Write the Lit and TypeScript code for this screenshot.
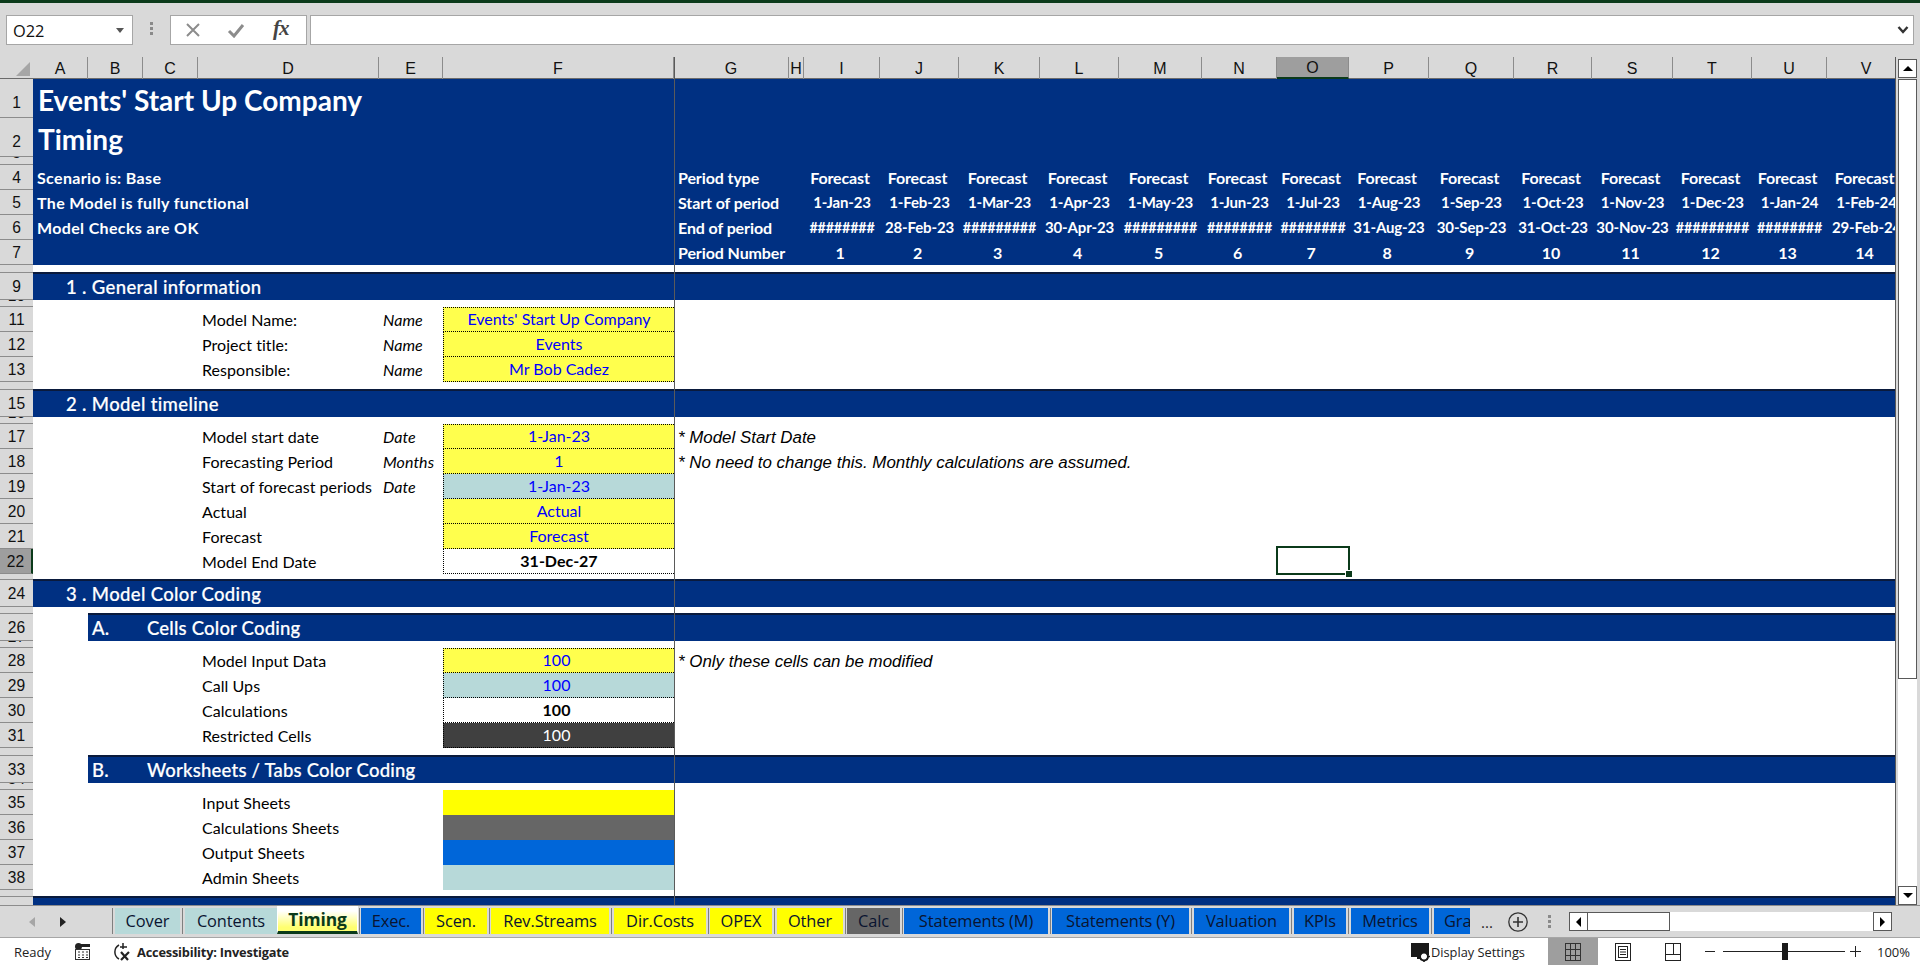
import { LitElement, html, css, svg } from "lit";
import { customElement } from "lit/decorators.js";

const COLS = "ABCDEFGHIJKLMNOPQRSTUV".split("");
const PERIOD_COLS = "IJKLMNOPQRSTUV".split("");
const STARTS = ["1-Jan-23","1-Feb-23","1-Mar-23","1-Apr-23","1-May-23","1-Jun-23","1-Jul-23","1-Aug-23","1-Sep-23","1-Oct-23","1-Nov-23","1-Dec-23","1-Jan-24","1-Feb-24"];
const ENDS = ["########","28-Feb-23","#########","30-Apr-23","#########","########","########","31-Aug-23","30-Sep-23","31-Oct-23","30-Nov-23","#########","########","29-Feb-24"];

type Cell = { t?: string; c?: string };
type Row = { n: number; h: number; k: string; label?: boolean; cells?: Record<string, Cell> };

const period = (vals: string[], c: string, label: string): Record<string, Cell> => {
  const out: Record<string, Cell> = { G: { t: label, c: "plabel" } };
  PERIOD_COLS.forEach((col, i) => (out[col] = { t: vals[i], c: vals[i].startsWith("#") ? c + " hash" : c }));
  return out;
};
const form = (label: string, unit: string, val: string, cls: string, note?: string): Record<string, Cell> => {
  const out: Record<string, Cell> = {
    D: { t: label, c: "lbl" },
    E: { t: unit, c: "unit" },
    F: { t: val, c: cls },
  };
  if (note) out.G = { t: note, c: "note" };
  return out;
};

const ROWS: Row[] = [
  { n: 1, h: 39, k: "blue tall", cells: { A: { t: "Events' Start Up Company", c: "title t1" } } },
  { n: 2, h: 39, k: "blue tall", cells: { A: { t: "Timing", c: "title t2" } } },
  { n: 3, h: 8, k: "blue thin", label: true },
  { n: 4, h: 25, k: "blue", cells: { A: { t: "Scenario is: Base", c: "info" }, ...period(Array(14).fill("Forecast"), "pval off", "Period type") } },
  { n: 5, h: 25, k: "blue", cells: { A: { t: "The Model is fully functional", c: "info" }, ...period(STARTS, "pval", "Start of period") } },
  { n: 6, h: 25, k: "blue", cells: { A: { t: "Model Checks are OK", c: "info" }, ...period(ENDS, "pval", "End of period") } },
  { n: 7, h: 25, k: "blue", cells: period(Array.from({ length: 14 }, (_, i) => String(i + 1)), "pval off", "Period Number") },
  { n: 8, h: 8, k: "white thin pre" },
  { n: 9, h: 27, k: "sec", cells: { A: { t: "1 . General information", c: "sect" } } },
  { n: 10, h: 7, k: "white thin", label: true },
  { n: 11, h: 25, k: "white", cells: form("Model Name:", "Name", "Events' Start Up Company", "inp yel first") },
  { n: 12, h: 25, k: "white", cells: form("Project title:", "Name", "Events", "inp yel") },
  { n: 13, h: 25, k: "white", cells: form("Responsible:", "Name", "Mr Bob Cadez", "inp yel") },
  { n: 14, h: 8, k: "white thin pre" },
  { n: 15, h: 27, k: "sec", cells: { A: { t: "2 . Model timeline", c: "sect" } } },
  { n: 16, h: 7, k: "white thin", label: true },
  { n: 17, h: 25, k: "white", cells: form("Model start date", "Date", "1-Jan-23", "inp yel first", "* Model Start Date") },
  { n: 18, h: 25, k: "white", cells: form("Forecasting Period", "Months", "1", "inp yel", "* No need to change this. Monthly calculations are assumed.") },
  { n: 19, h: 25, k: "white", cells: form("Start of forecast periods", "Date", "1-Jan-23", "inp teal") },
  { n: 20, h: 25, k: "white", cells: form("Actual", "", "Actual", "inp yel") },
  { n: 21, h: 25, k: "white", cells: form("Forecast", "", "Forecast", "inp yel") },
  { n: 22, h: 25, k: "white", cells: form("Model End Date", "", "31-Dec-27", "inp calc") },
  { n: 23, h: 6, k: "white thin pre" },
  { n: 24, h: 27, k: "sec", cells: { A: { t: "3 . Model Color Coding", c: "sect" } } },
  { n: 25, h: 7, k: "white thin pre subpre" },
  { n: 26, h: 27, k: "sec sub", cells: { B: { t: "A.", c: "subh" }, C: { t: "Cells Color Coding", c: "subh" } } },
  { n: 27, h: 7, k: "white thin", label: true },
  { n: 28, h: 25, k: "white", cells: form("Model Input Data", "", "100", "inp yel first shift", "* Only these cells can be modified") },
  { n: 29, h: 25, k: "white", cells: form("Call Ups", "", "100", "inp teal shift") },
  { n: 30, h: 25, k: "white", cells: form("Calculations", "", "100", "inp calc shift") },
  { n: 31, h: 25, k: "white", cells: form("Restricted Cells", "", "100", "inp dark shift") },
  { n: 32, h: 8, k: "white thin pre subpre" },
  { n: 33, h: 27, k: "sec sub", cells: { B: { t: "B.", c: "subh" }, C: { t: "Worksheets / Tabs Color Coding", c: "subh" } } },
  { n: 34, h: 7, k: "white thin", label: true },
  { n: 35, h: 25, k: "white", cells: form("Input Sheets", "", "", "sw-y") },
  { n: 36, h: 25, k: "white", cells: form("Calculations Sheets", "", "", "sw-g") },
  { n: 37, h: 25, k: "white", cells: form("Output Sheets", "", "", "sw-b") },
  { n: 38, h: 25, k: "white", cells: form("Admin Sheets", "", "", "sw-t") },
  { n: 39, h: 7, k: "white thin pre" },
  { n: 40, h: 27, k: "sec thin" },
];

const TABS = [
  { t: "Cover", w: 65, gap: 5, c: "t-teal" },
  { t: "Contents", w: 92, gap: 0, c: "t-teal" },
  { t: "Timing", w: 81, gap: 3, c: "t-active" },
  { t: "Exec.", w: 60, gap: 4, c: "t-blue" },
  { t: "Scen.", w: 62, gap: 4, c: "t-yel" },
  { t: "Rev.Streams", w: 118, gap: 5, c: "t-yel" },
  { t: "Dir.Costs", w: 92, gap: 4, c: "t-yel" },
  { t: "OPEX", w: 62, gap: 5, c: "t-yel" },
  { t: "Other", w: 66, gap: 4, c: "t-yel" },
  { t: "Calc", w: 53, gap: 4, c: "t-gray" },
  { t: "Statements (M)", w: 144, gap: 4, c: "t-blue" },
  { t: "Statements (Y)", w: 137, gap: 5, c: "t-blue" },
  { t: "Valuation", w: 95, gap: 5, c: "t-blue" },
  { t: "KPIs", w: 52, gap: 5, c: "t-blue" },
  { t: "Metrics", w: 78, gap: 5, c: "t-blue" },
  { t: "Graphs", w: 60, gap: 0, c: "t-blue" },
];

@customElement("app-root")
export class AppRoot extends LitElement {
  static styles = css`
    :host { display: block; width: 1920px; height: 966px; overflow: hidden; background: #d9d9d9; }
    * { box-sizing: border-box; }
    .app { display: flex; flex-direction: column; height: 966px; }
    .topline { height: 3px; background: #0b3a1a; flex: none; }

    .fbar { height: 54px; flex: none; display: flex; align-items: flex-start; padding: 12px 6px 0 6px; background: #d9d9d9; }
    .namebox { width: 127px; height: 30px; background: #fff; border: 1px solid #a6a6a6; display: flex; align-items: center; justify-content: space-between; padding: 0 8px 0 6px; font: 16.4px "Open Sans", sans-serif; color: #111; }
    .caret { width: 0; height: 0; border-left: 4px solid transparent; border-right: 4px solid transparent; border-top: 5px solid #555; }
    .grip { width: 37px; display: flex; flex-direction: column; align-items: center; gap: 2px; padding-top: 7px; }
    .grip i { width: 3px; height: 3px; background: #8a8a8a; display: block; }
    .fbtns { width: 137px; height: 30px; background: #fff; border: 1px solid #a6a6a6; display: flex; align-items: center; padding-left: 14px; margin-right: 3px; }
    .fbtns svg { display: block; }
    .fx { font: italic bold 21px "Liberation Serif", serif; color: #444; margin-left: 28px; margin-top: -3px; letter-spacing: -1px; }
    .finput { flex: 1; height: 30px; background: #fff; border: 1px solid #a6a6a6; display: flex; align-items: center; justify-content: flex-end; padding-right: 4px; }

    .sheet { flex: none; height: 848px; display: flex; }
    .grid { position: relative; width: 1895px; height: 848px; overflow: hidden; flex: none; background: #fff; }
    .row { display: grid; grid-template-columns: 33px 55px 55px 55px 181px 64px 231px 115px 15px 76px 79px 81px 79px 83px 75px 72px 80px 85px 78px 81px 79px 75px 79px; width: 1906px; }
    .blue { background: #003082; }
    .white { background: #fff; }
    .sec { background: linear-gradient(#0a1a3c 1px, #003082 1px); }
    .pre { background: linear-gradient(to top, #0a1a3c 1px, #fff 1px); }
    .colhead { height: 21px; background: #d9d9d9; border-bottom: 1px solid #6b6b6b; box-sizing: content-box; }
    .ch { display: flex; align-items: center; justify-content: center; font: 16px "Liberation Sans", sans-serif; color: #111; border-right: 1px solid #8c8c8c; padding-top: 2px; }
    .ch.corner { border-right: 0; position: relative; }
    .ch.sel { background: #9e9e9e; border-bottom: 2px solid #0b3a1a; }
    .corner svg { position: absolute; right: 3px; bottom: 3px; }
    .rh { background: #d9d9d9; border-bottom: 1px solid #8c8c8c; display: flex; justify-content: center; align-items: center; font: 15.6px "Liberation Sans", sans-serif; color: #111; overflow: hidden; padding-top: 2px; }
    .tall .rh { padding-top: 10px; }
    .thin .rh { align-items: flex-start; padding-top: 0; }
    .thin .rh span { margin-top: -13px; }
    .rh.sel { background: #9e9e9e; border-right: 2px solid #0b3a1a; }

    .cell { display: flex; align-items: center; white-space: nowrap; min-width: 0; font: 16px Lato, sans-serif; letter-spacing: 0.05px; color: #000; }
    .sub .cell:nth-child(2), .subpre .cell:nth-child(2) { background: #fff; }
    .title { color: #fff; font-weight: 700; padding-left: 5px; font-size: 28px; padding-top: 3px; letter-spacing: 0; }
    .t2 { padding-left: 5px; }
    .info { color: #fff; font-weight: 700; font-size: 16px; padding-left: 4px; letter-spacing: 0.35px; }
    .plabel { color: #fff; font-weight: 700; font-size: 16px; padding-left: 4px; letter-spacing: -0.1px; }
    .pval { color: #fff; font-weight: 700; font-size: 15px; justify-content: center; padding-bottom: 1px; letter-spacing: -0.15px; }
    .pval.off { font-size: 16px; padding-right: 4px; }
    .pval.hash { font-size: 14.3px; }
    .sect { color: #fff; font-weight: 500; font-size: 18.5px; padding-left: 33px; padding-top: 1px; letter-spacing: 0.35px; -webkit-text-stroke: 0.2px #fff; }
    .subh { color: #fff; font-size: 18.5px; padding-left: 4px; padding-top: 1px; font-weight: 500; letter-spacing: 0.2px; -webkit-text-stroke: 0.2px #fff; }
    .lbl { padding-left: 4px; }
    .unit { padding-left: 4px; font-style: italic; }
    .note { padding-left: 4px; padding-top: 2px; font: italic 16.9px "Liberation Sans", sans-serif; letter-spacing: 0; }
    .inp { border-left: 1px dotted #000; border-bottom: 1px dotted #000; justify-content: center; padding-bottom: 2px; letter-spacing: 0; }
    .inp.first { border-top: 1px dotted #000; }
    .yel { background: #ffff4d; color: #0000ff; }
    .teal { background: #b7d9d9; color: #0000ff; }
    .calc { background: #fff; color: #000; font-weight: 700; }
    .dark { background: #404040; color: #fff; }
    .shift { padding-right: 5px; }
    .sw-y { background: #ffff00; }
    .sw-g { background: #666666; }
    .sw-b { background: #0066d9; }
    .sw-t { background: #b7d9d9; }

    .freeze { position: absolute; left: 674px; top: 0; bottom: 0; width: 1px; background: #5a5a5a; }
    .selection { position: absolute; left: 1276px; top: 489px; width: 74px; height: 29px; border: 2px solid #0b3a1a; }
    .selection::after { content: ""; position: absolute; right: -4px; bottom: -4px; width: 6px; height: 6px; background: #0b3a1a; border: 1px solid #fff; border-width: 1px 0 0 1px; }

    .vscroll { flex: 1; display: flex; flex-direction: column; border-left: 1px solid #595959; padding: 2px 3px 0 2px; background: #d9d9d9; }
    .sbtn { flex: none; height: 19px; background: #fff; border: 1px solid #595959; display: flex; align-items: center; justify-content: center; }
    .up { width: 0; height: 0; border-left: 5px solid transparent; border-right: 5px solid transparent; border-bottom: 5px solid #000; }
    .down { width: 0; height: 0; border-left: 5px solid transparent; border-right: 5px solid transparent; border-top: 5px solid #000; }
    .thumb { flex: none; height: 600px; background: #fff; border: 1px solid #595959; margin-top: 1px; }
    .track { flex: 1; background: #fff; }

    .tabs { flex: none; height: 33px; display: flex; align-items: flex-start; background: #d9d9d9; border-top: 1px solid #8c8c8c; border-bottom: 1px solid #a6a6a6; }
    .nav { flex: none; width: 112px; height: 31px; display: flex; align-items: center; padding-left: 29px; gap: 25px; }
    .nav .l { width: 0; height: 0; border-top: 5px solid transparent; border-bottom: 5px solid transparent; border-right: 6px solid #a6a6a6; }
    .nav .r { width: 0; height: 0; border-top: 5px solid transparent; border-bottom: 5px solid transparent; border-left: 6px solid #222; }
    .tablist { flex: none; width: 1358px; height: 31px; display: flex; overflow: hidden; padding-top: 2px; }
    .tsep { flex: none; display: flex; justify-content: center; height: 26px; }
    .tsep i { width: 1px; background: #7f7f7f; display: block; }
    .firstsep { width: 3px; justify-content: flex-start; }
    .tab { flex: none; height: 26px; display: flex; align-items: center; justify-content: center; font: 16.4px "Open Sans", sans-serif; color: #0a1430; white-space: nowrap; overflow: hidden; letter-spacing: -0.1px; padding-bottom: 2px; }
    .t-clip { justify-content: flex-start; padding-left: 10px; }
    .t-teal { background: #b7d9d9; }
    .t-blue { background: #0066d9; }
    .t-yel { background: #ffff00; }
    .t-gray { background: #666666; }
    .t-active { height: 29px; margin-top: -3px; background: linear-gradient(#fff 20%, #ffff70 85%); border: 1px solid #fff; border-bottom: 3px solid #0b3a1a; color: #0b3a1a; font-weight: 700; font-size: 17.4px; padding-bottom: 0; }
    .more { width: 34px; text-align: center; font: 15px "Open Sans", sans-serif; color: #222; padding-top: 6px; flex: none; }
    .plus { flex: none; margin: 6px 0 0 4px; }
    .hgrip { flex: none; width: 5px; margin: 9px 0 0 19px; display: flex; flex-direction: column; gap: 2px; align-items: center; }
    .hgrip i { width: 3px; height: 3px; background: #8a8a8a; display: block; }
    .hs { flex: none; width: 323px; height: 19px; margin: 6px 0 0 17px; display: flex; background: #fff; }
    .hb { flex: none; width: 19px; height: 19px; background: #fff; border: 1px solid #595959; display: flex; align-items: center; justify-content: center; }
    .hb .l { width: 0; height: 0; border-top: 5px solid transparent; border-bottom: 5px solid transparent; border-right: 5px solid #000; }
    .hb .r { width: 0; height: 0; border-top: 5px solid transparent; border-bottom: 5px solid transparent; border-left: 5px solid #000; }
    .hthumb { flex: none; width: 82px; height: 19px; border: 1px solid #595959; border-left: 0; }
    .hfill { flex: 1; }

    .status { flex: 1; background: #fff; display: flex; align-items: flex-start; font: 13px "Open Sans", sans-serif; color: #222; }
    .ready { width: 75px; padding: 5px 0 0 14px; flex: none; }
    .st-ic { flex: none; margin-top: 5px; }
    .acc { flex: none; margin-left: 23px; margin-top: 4px; }
    .acct { flex: none; margin-left: 4px; padding-top: 5px; font-weight: 700; font-size: 12.8px; letter-spacing: -0.2px; width: 1274px; }
    .ds { flex: none; margin-top: 4px; }
    .dst { flex: none; width: 118px; padding: 5px 0 0 1px; font-size: 12.8px; }
    .viewbtn { flex: none; width: 50px; height: 27px; display: flex; align-items: center; justify-content: center; }
    .viewbtn.on { background: #9e9e9e; }
    .zoom { flex: none; display: flex; align-items: center; height: 27px; margin-left: 4px; }
    .minus { width: 10px; height: 1px; background: #222; margin-left: 3px; }
    .slider { width: 122px; height: 1px; background: #222; margin-left: 8px; position: relative; }
    .slider i { position: absolute; left: 59px; top: -8px; width: 6px; height: 17px; background: #1a1a1a; display: block; }
    .plusz { margin-left: 5px; width: 11px; height: 11px; position: relative; }
    .plusz::before { content: ""; position: absolute; left: 0; right: 0; top: 5px; height: 1px; background: #222; }
    .plusz::after { content: ""; position: absolute; top: 0; bottom: 0; left: 5px; width: 1px; background: #222; }
    .pct { margin-left: 16px; font-size: 13px; }
  `;

  private renderRow(r: Row) {
    const cells = r.cells || {};
    return html`<div class="row ${r.k}" style="height:${r.h}px">
      <div class="rh ${r.n === 22 ? "sel" : ""}"><span>${r.k.includes("thin") && !r.label ? "" : r.n}</span></div>
      ${COLS.map((col) => {
        const c = cells[col];
        return html`<div class="cell ${c?.c || ""}">${c?.t || ""}</div>`;
      })}
    </div>`;
  }

  private status() {
    return html`<div class="status">
      <div class="ready">Ready</div>
      <svg class="st-ic" width="15" height="17" viewBox="0 0 15 17">
        <circle cx="3.5" cy="3.5" r="3.5" fill="#222"/><rect x="6" y="1" width="9" height="3" fill="#222"/>
        <rect x="0.5" y="6.5" width="14" height="10" fill="#fff" stroke="#333"/>
        <path d="M3 9h2M7 9h2M11 9h2M3 12h2M7 12h2M11 12h2M3 14.5h2M7 14.5h2M11 14.5h2" stroke="#333" stroke-width="1.2"/>
      </svg>
      <svg class="acc" width="20" height="20" viewBox="0 0 20 20" fill="none" stroke="#222" stroke-width="1.5">
        <path d="M6 3A8 8 0 0 0 6 17"/><path d="M10 1v6M7 5h7"/><path d="M8 10l7 8M16 10l-8 8" stroke-width="2.2"/>
      </svg>
      <div class="acct">Accessibility: Investigate</div>
      <svg class="ds" width="19" height="20" viewBox="0 0 19 20">
        <path d="M0 1h18v12H9v4H6v-2H0z" fill="#1a1a1a"/>
        <circle cx="13" cy="14.5" r="4" fill="#fff" stroke="#1a1a1a" stroke-width="2"/>
        <path d="M13 8.5v2M13 18.5v1.5M7.5 14.5h2M16.5 14.5H19M9.5 11l1.3 1.3M15.2 16.7l1.3 1.3M16.5 11l-1.3 1.3M10.8 16.7l-1.3 1.3" stroke="#1a1a1a" stroke-width="1.5"/>
      </svg>
      <div class="dst">Display Settings</div>
      <div class="viewbtn on">
        <svg width="16" height="18" viewBox="0 0 16 18" fill="none" stroke="#333"><rect x=".5" y=".5" width="15" height="17"/><path d="M5.5 0v18M10.5 0v18M0 6.5h16M0 12.5h16"/></svg>
      </div>
      <div class="viewbtn">
        <svg width="16" height="18" viewBox="0 0 16 18" fill="none" stroke="#222"><rect x=".5" y=".5" width="15" height="17"/><rect x="3.5" y="3.5" width="9" height="11"/><path d="M5 6.5h6M5 9h6M5 11.5h6"/></svg>
      </div>
      <div class="viewbtn">
        <svg width="16" height="18" viewBox="0 0 16 18" fill="none" stroke="#222"><rect x=".5" y=".5" width="15" height="17"/><path d="M0 11.5h16M8.5 0v11.5"/></svg>
      </div>
      <div class="zoom">
        <div class="minus"></div>
        <div class="slider"><i></i></div>
        <div class="plusz"></div>
        <div class="pct">100%</div>
      </div>
    </div>`;
  }

  render() {
    return html`<div class="app">
      <div class="topline"></div>
      <div class="fbar">
        <div class="namebox"><span>O22</span><span class="caret"></span></div>
        <div class="grip"><i></i><i></i><i></i></div>
        <div class="fbtns">
          ${svg`<svg width="16" height="16" viewBox="0 0 16 16" stroke="#8c8c8c" stroke-width="2" fill="none"><path d="M2 2l12 12M14 2L2 14"/></svg>`}
          <svg style="margin-left:26px" width="18" height="15" viewBox="0 0 18 15" stroke="#8c8c8c" stroke-width="3" fill="none"><path d="M2 8l5 5L16 2"/></svg>
          <span class="fx">fx</span>
        </div>
        <div class="finput">
          <svg width="12" height="8" viewBox="0 0 12 8" fill="none" stroke="#333" stroke-width="2.4"><path d="M1.5 1l4.5 5 4.5-5"/></svg>
        </div>
      </div>
      <div class="sheet">
        <div class="grid">
          <div class="row colhead">
            <div class="ch corner"><svg width="14" height="14" viewBox="0 0 14 14"><path d="M14 0v14H0z" fill="#a6a6a6"/></svg></div>
            ${COLS.map((c) => html`<div class="ch ${c === "O" ? "sel" : ""}">${c}</div>`)}
          </div>
          ${ROWS.map((r) => this.renderRow(r))}
          <div class="freeze"></div>
          <div class="selection"></div>
        </div>
        <div class="vscroll">
          <div class="sbtn"><span class="up"></span></div>
          <div class="thumb"></div>
          <div class="track"></div>
          <div class="sbtn"><span class="down"></span></div>
        </div>
      </div>
      <div class="tabs">
        <div class="nav"><span class="l"></span><span class="r"></span></div>
        <div class="tablist">
          <div class="tsep firstsep"><i></i></div>
          ${TABS.map((t) => html`<div class="tab ${t.c} ${t.t === "Graphs" ? "t-clip" : ""}" style="width:${t.w}px">${t.t}</div>
            ${t.gap ? html`<div class="tsep" style="width:${t.gap}px"><i></i></div>` : ""}`)}
        </div>
        <div class="more">...</div>
        <svg class="plus" width="20" height="20" viewBox="0 0 20 20" fill="none" stroke="#333" stroke-width="1.3"><circle cx="10" cy="10" r="9.2"/><path d="M10 5v10M5 10h10" stroke-width="1.6"/></svg>
        <div class="hgrip"><i></i><i></i><i></i></div>
        <div class="hs">
          <div class="hb"><span class="l"></span></div>
          <div class="hthumb"></div>
          <div class="hfill"></div>
          <div class="hb"><span class="r"></span></div>
        </div>
      </div>
      ${this.status()}
    </div>`;
  }
}
